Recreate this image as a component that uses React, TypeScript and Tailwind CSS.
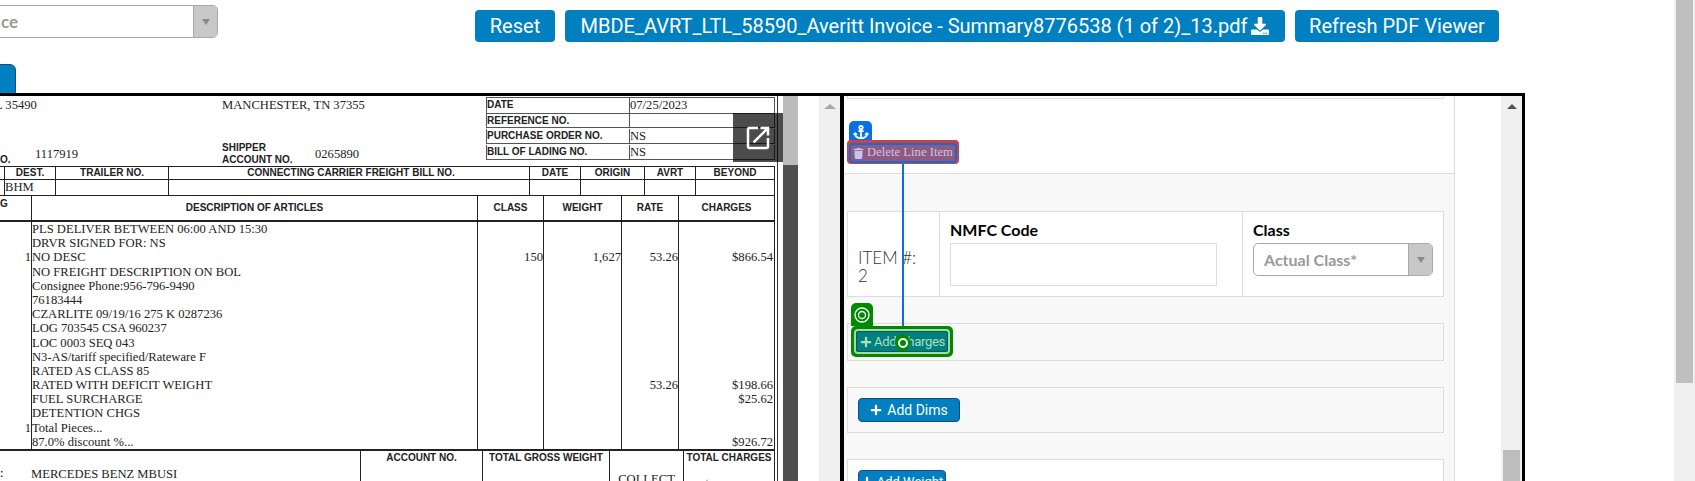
import { FaAnchor, FaPlus, FaTrash, FaDownload } from "react-icons/fa";

const bodyRows = [
  ["", "PLS DELIVER BETWEEN 06:00 AND 15:30", "", "", "", ""],
  ["", "DRVR SIGNED FOR: NS", "", "", "", ""],
  ["1", "NO DESC", "150", "1,627", "53.26", "$866.54"],
  ["", "NO FREIGHT DESCRIPTION ON BOL", "", "", "", ""],
  ["", "Consignee Phone:956-796-9490", "", "", "", ""],
  ["", "76183444", "", "", "", ""],
  ["", "CZARLITE 09/19/16 275 K 0287236", "", "", "", ""],
  ["", "LOG 703545 CSA 960237", "", "", "", ""],
  ["", "LOC 0003 SEQ 043", "", "", "", ""],
  ["", "N3-AS/tariff specified/Rateware F", "", "", "", ""],
  ["", "RATED AS CLASS 85", "", "", "", ""],
  ["", "RATED WITH DEFICIT WEIGHT", "", "", "53.26", "$198.66"],
  ["", "FUEL SURCHARGE", "", "", "", "$25.62"],
  ["", "DETENTION CHGS", "", "", "", ""],
  ["1", "Total Pieces...", "", "", "", ""],
  ["", "87.0% discount %...", "", "", "", "$926.72"],
];

const refRows = [
  ["DATE", "07/25/2023", "h-[16px]"],
  ["REFERENCE NO.", "", "h-[14px]"],
  ["PURCHASE ORDER NO.", "NS", "h-[16px] pt-[1px]"],
  ["BILL OF LADING NO.", "NS", "h-[16px] pt-[1px]"],
];

const Sans = "font-['Liberation_Sans',Arial,sans-serif]";

const DocBody = () => (
  <div className="w-[778px] h-full overflow-hidden border-r border-[#333] font-['Liberation_Serif',serif] text-[12.6px] text-[#222]">
    {/* top of the invoice */}
    <div className="flex h-[70px] w-[775px]">
      <div className="w-[486px] flex flex-col justify-between">
        <div className="flex pt-[2px] leading-[14px]">
          <span className="w-[227px] -ml-[5px]">L 35490</span>
          <span>MANCHESTER, TN 37355</span>
        </div>
        <div className="flex items-end">
          <span className={`${Sans} w-[35px] font-bold text-[10px] leading-[12px]`}>O.</span>
          <span className="w-[187px] leading-[24px]">1117919</span>
          <span className={`${Sans} w-[93px] font-bold text-[10px] leading-[12px]`}>
            SHIPPER
            <br />
            ACCOUNT NO.
          </span>
          <span className="leading-[24px]">0265890</span>
        </div>
      </div>
      <div className="w-[289px] mt-[1px] border-t border-[#555] h-fit">
        {refRows.map((r) => (
          <div key={r[0]} className={`grid grid-cols-[144px_145px] border-b border-[#555] ${r[2]}`}>
            <span className={`${Sans} font-bold text-[10px] leading-[14px] border-x border-[#555]`}>{r[0]}</span>
            <span className="leading-[14px] border-r border-[#555]">{r[1]}</span>
          </div>
        ))}
      </div>
    </div>

    {/* carrier rows */}
    <div className={`${Sans} grid grid-cols-[5px_51px_113px_361px_51px_64px_51px_79px] w-[775px] h-[14px] border-y border-[#222] font-bold text-[10px] leading-[12px] text-center`}>
      <span className="border-r border-[#222]"></span>
      <span className="border-r border-[#222]">DEST.</span>
      <span className="border-r border-[#222]">TRAILER NO.</span>
      <span className="border-r border-[#222] pl-[4px]">CONNECTING CARRIER FREIGHT BILL NO.</span>
      <span className="border-r border-[#222]">DATE</span>
      <span className="border-r border-[#222]">ORIGIN</span>
      <span className="border-r border-[#222]">AVRT</span>
      <span className="border-r border-[#222]">BEYOND</span>
    </div>
    <div className="grid grid-cols-[5px_51px_113px_361px_51px_64px_51px_79px] w-[775px] h-[16px] border-b border-[#222] leading-[14px]">
      <span className="border-r border-[#222]"></span>
      <span className="border-r border-[#222]">BHM</span>
      <span className="border-r border-[#222]"></span>
      <span className="border-r border-[#222]"></span>
      <span className="border-r border-[#222]"></span>
      <span className="border-r border-[#222]"></span>
      <span className="border-r border-[#222]"></span>
      <span className="border-r border-[#222]"></span>
    </div>

    {/* articles table */}
    <div className={`${Sans} grid grid-cols-[32px_446px_66px_78px_57px_96px] w-[775px] h-[26px] border-b-2 border-[#222] font-bold text-[10px] leading-[24px] text-center`}>
      <span className="border-r border-[#222] text-left leading-[16px]">G</span>
      <span className="border-r border-[#222]">DESCRIPTION OF ARTICLES</span>
      <span className="border-r border-[#222]">CLASS</span>
      <span className="border-r border-[#222]">WEIGHT</span>
      <span className="border-r border-[#222]">RATE</span>
      <span className="border-r border-[#222]">CHARGES</span>
    </div>
    <div className="border-b-2 border-[#222] w-[775px]">
      {bodyRows.map((r, i) => (
        <div key={i} className="grid grid-cols-[32px_446px_66px_78px_57px_96px] h-[14.2px] leading-[14px]">
          <span className="border-r border-[#222] text-right">{r[0]}</span>
          <span className="border-r border-[#222]">{r[1]}</span>
          <span className="border-r border-[#222] text-right">{r[2]}</span>
          <span className="border-r border-[#222] text-right">{r[3]}</span>
          <span className="border-r border-[#222] text-right">{r[4]}</span>
          <span className="border-r border-[#222] text-right pr-[1px]">{r[5]}</span>
        </div>
      ))}
    </div>

    {/* totals */}
    <div className="grid grid-cols-[360px_123px_127px_74px_91px] w-[775px] h-[40px]">
      <div className="flex pt-[16px] leading-[14px]">
        <span className={`${Sans} w-[31px] font-bold text-[10px]`}>:</span>
        <span>MERCEDES BENZ MBUSI</span>
      </div>
      <div className="border-x border-[#222] text-center">
        <div className={`${Sans} font-bold text-[10px] leading-[13px]`}>ACCOUNT NO.</div>
        <div className="mt-[14px] leading-[14px]">0265890</div>
      </div>
      <div className="border-r border-[#222] text-center">
        <div className={`${Sans} font-bold text-[10px] leading-[13px]`}>TOTAL GROSS WEIGHT</div>
        <div className="mt-[14px] leading-[14px]">1,627</div>
      </div>
      <div className="border-r border-[#222] text-center pt-[21px] leading-[14px]">COLLECT</div>
      <div className="border-r border-[#222] text-center">
        <div className={`${Sans} font-bold text-[10px] leading-[13px]`}>TOTAL CHARGES</div>
        <div className="mt-[14px] leading-[14px]">$1,064.10</div>
      </div>
    </div>
  </div>
);

const Caret = () => (
  <div className="w-[24px] shrink-0 bg-[#c8c8c8] border-l border-[#aaa] flex items-center justify-center">
    <div className="w-0 h-0 border-x-[4px] border-x-transparent border-t-[6px] border-t-[#8a8a8a]"></div>
  </div>
);

const BlueButton = ({ children, className }: { children: React.ReactNode; className: string }) => (
  <button className={`bg-[#0080c0] text-white rounded-[4px] font-['Roboto',sans-serif] whitespace-nowrap ${className}`}>{children}</button>
);

const App = () => {
  return (
    <div className="flex w-[1695px] h-[481px] overflow-hidden bg-white">
      <div className="w-[1674px] shrink-0">
        {/* toolbar */}
        <div className="h-[93px] overflow-hidden">
          <div className="flex items-start">
            <div className="flex h-[33px] w-[300px] -ml-[82px] mt-[5px] overflow-hidden rounded-[5px] border border-[#aaa]">
              <div className="flex-1 text-right pr-[175px] leading-[31px] text-[17px] font-['Lato',sans-serif] font-bold text-[#999]">Invoice</div>
              <Caret />
            </div>
            <div className="flex gap-[10px] ml-[257px] mt-[10px]">
              <BlueButton className="w-[80px] h-[32px] text-[20px]">Reset</BlueButton>
              <BlueButton className="w-[720px] h-[32px] text-[20px] flex items-center justify-center gap-[4px]">
                MBDE_AVRT_LTL_58590_Averitt Invoice - Summary8776538 (1 of 2)_13.pdf
                <FaDownload className="text-[18px]" />
              </BlueButton>
              <BlueButton className="w-[204px] h-[32px] text-[20px]">Refresh PDF Viewer</BlueButton>
            </div>
          </div>
          <div className="w-[60px] h-[33px] -ml-[44px] mt-[22px] bg-[#0080c0] border border-[#1c4a80] rounded-[6px]"></div>
        </div>

        {/* viewers */}
        <div className="flex w-[1525px] h-[388px] border-t-[3px] border-r-[3px] border-black">
          <div className="relative flex w-[840px] shrink-0">
            <DocBody />
            <div className="w-[5px] shrink-0"></div>
            <div className="w-[15px] shrink-0 flex flex-col">
              <div className="h-[69px] bg-[#bbbbbb]"></div>
              <div className="flex-1 bg-[#505050]"></div>
            </div>
            <div className="w-[21px] shrink-0"></div>
            <div className="w-[21px] shrink-0 bg-[#f0f0f0] flex justify-center pt-[8px]">
              <div className="w-0 h-0 border-x-[6px] border-x-transparent border-b-[5px] border-b-[#a8a8a8]"></div>
            </div>
            {/* pop-out button */}
            <button className="absolute left-[733px] top-[17px] w-[50px] h-[49px] bg-black/70 flex items-center justify-center">
              <svg viewBox="0 0 24 24" className="w-[30px] h-[30px]" fill="white">
                <path d="M19 19H5V5h7V3H5c-1.11 0-2 .9-2 2v14c0 1.1.89 2 2 2h14c1.1 0 2-.9 2-2v-7h-2v7zM14 3v2h3.59l-9.83 9.83 1.41 1.41L19 6.41V10h2V3h-7z" />
              </svg>
            </button>
          </div>

          <div className="relative flex flex-1 border-l-[4px] border-black min-w-0">
            <div className="w-[611px] shrink-0 border-r border-[#ddd] overflow-hidden">
              {/* first line item, end of it */}
              <div className="h-[78px] bg-white border-b border-[#ddd] pl-[3px] pr-[10px]">
                <div className="h-[3px] border border-t-0 border-[#ddd]"></div>
              </div>
              <div className="h-[310px] bg-[#f8f8f8] pl-[3px] pr-[10px] pt-[37px]">
                <div className="flex h-[86px] bg-white border border-[#ddd]">
                  <div className="w-[92px] shrink-0 border-r border-[#ddd] pl-[10px] pt-[37px] text-[17px] leading-[18px] font-['Lato',sans-serif] font-light text-[#333]">
                    ITEM #:
                    <br />2
                  </div>
                  <div className="w-[303px] shrink-0 border-r border-[#ddd] pl-[10px] pt-[7px]">
                    <div className="text-[16px] leading-[22px] font-['Lato',sans-serif] font-bold text-black">NMFC Code</div>
                    <div className="w-[267px] h-[43px] mt-[2px] border border-[#ddd]"></div>
                  </div>
                  <div className="flex-1 pl-[10px] pt-[7px]">
                    <div className="text-[16px] leading-[22px] font-['Lato',sans-serif] font-bold text-black">Class</div>
                    <div className="flex w-[180px] h-[33px] mt-[2px] overflow-hidden rounded-[5px] border border-[#aaa]">
                      <div className="flex-1 pl-[10px] leading-[31px] text-[16px] font-['Lato',sans-serif] font-bold text-[#999]">Actual Class*</div>
                      <Caret />
                    </div>
                  </div>
                </div>
                <div className="h-[38px] mt-[26px] border border-[#ddd]"></div>
                <div className="h-[46px] mt-[26px] border border-[#ddd] pl-[10px] pt-[10px]">
                  <BlueButton className="flex items-center justify-center gap-[5px] w-[102px] h-[24px] text-[14px] border border-[#1c4a80]">
                    <FaPlus className="text-[12px]" />
                    Add Dims
                  </BlueButton>
                </div>
                <div className="h-[60px] mt-[26px] bg-white border border-[#ddd] pl-[10px] pt-[10px]">
                  <BlueButton className="flex items-center justify-center gap-[4px] w-[88px] h-[24px] text-[13px] border border-[#1c4a80]">
                    <FaPlus className="text-[12px]" />
                    Add Weight
                  </BlueButton>
                </div>
              </div>
            </div>
            <div className="w-[46px] shrink-0 bg-white"></div>
            <div className="w-[21px] shrink-0 bg-[#f0f0f0] flex flex-col items-center pt-[8px]">
              <div className="w-0 h-0 border-x-[5px] border-x-transparent border-b-[5px] border-b-[#505050]"></div>
              <div className="flex-1"></div>
              <div className="w-[17px] h-[31px] bg-[#bdbdbd]"></div>
            </div>

            {/* link annotation between the two highlighted buttons */}
            <div className="absolute left-[58px] top-[68px] w-[2px] h-[162px] bg-[#0a6fe0]"></div>
            <div className="absolute left-[5px] top-[25px] w-[23px] h-[21px] bg-[#0a6fe0] rounded-t-[5px] flex items-center justify-center">
              <FaAnchor className="text-white text-[16px]" />
            </div>
            <div className="absolute left-[3px] top-[44px] w-[112px] h-[24px] bg-[#d04040] rounded-[4px] pl-[2px] pt-[3px]">
              <div className="flex items-center gap-[3px] w-[108px] h-[20px] pl-[2px] bg-[#8e5a7e] border-2 border-[#0a6fe0] rounded-[4px] text-[12.7px] font-['Liberation_Serif',serif] text-[#c8c4f0] whitespace-nowrap">
                <FaTrash className="text-[11px] shrink-0" />
                Delete Line Item
              </div>
            </div>
            <div className="absolute left-[7px] top-[207px] w-[22px] h-[23px] bg-[#008a00] rounded-t-[5px] flex items-center justify-center">
              <svg viewBox="0 0 16 16" className="w-[16px] h-[16px]" fill="none" stroke="white" strokeWidth="1.3">
                <circle cx="8" cy="8" r="7" />
                <circle cx="8" cy="8" r="3.5" />
              </svg>
            </div>
            <div className="absolute left-[7px] top-[230px] w-[102px] h-[31px] bg-[#008a00] rounded-[5px] p-[3px]">
              <div className="flex items-center gap-[2px] w-[96px] h-[25px] pl-[4px] bg-[#007f80] border-2 border-[#a8d8a8] outline-1 outline-[#0a5a50] -outline-offset-3 rounded-[4px] text-[13px] tracking-[-0.3px] font-['Roboto',sans-serif] text-[#a8e0b8] whitespace-nowrap">
                <FaPlus className="text-[12px] shrink-0" />
                Add Charges
              </div>
            </div>
            <div className="absolute left-[51px] top-[238px] w-[15px] h-[17px] rounded-full bg-[#008a00] flex items-center justify-center">
              <div className="w-[10px] h-[10px] rounded-full border-2 border-white bg-[#008a00]"></div>
            </div>
          </div>
        </div>
      </div>

      {/* page scrollbar */}
      <div className="w-[21px] shrink-0 bg-[#f0f0f0] px-[2px]">
        <div className="h-[383px] bg-[#c0c0c0]"></div>
      </div>
    </div>
  );
};

export default App;
